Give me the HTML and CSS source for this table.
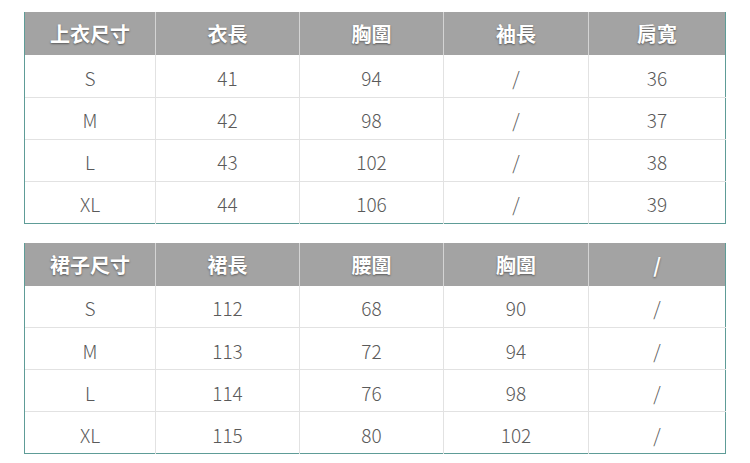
FILE: index.html
```html
<!DOCTYPE html>
<html lang="zh-Hant">
<head>
<meta charset="utf-8">
<link rel="stylesheet" href="styles.css">
</head>
<body>
<div class="page">
  <table class="size-table">
    <colgroup><col class="c1"><col class="c2"><col class="c3"><col class="c4"><col class="c5"></colgroup>
    <thead>
      <tr><th>上衣尺寸</th><th>衣長</th><th>胸圍</th><th>袖長</th><th>肩寬</th></tr>
    </thead>
    <tbody>
      <tr><td>S</td><td>41</td><td>94</td><td>/</td><td>36</td></tr>
      <tr><td>M</td><td>42</td><td>98</td><td>/</td><td>37</td></tr>
      <tr><td>L</td><td>43</td><td>102</td><td>/</td><td>38</td></tr>
      <tr><td>XL</td><td>44</td><td>106</td><td>/</td><td>39</td></tr>
    </tbody>
  </table>
  <table class="size-table">
    <colgroup><col class="c1"><col class="c2"><col class="c3"><col class="c4"><col class="c5"></colgroup>
    <thead>
      <tr><th>裙子尺寸</th><th>裙長</th><th>腰圍</th><th>胸圍</th><th>/</th></tr>
    </thead>
    <tbody>
      <tr><td>S</td><td>112</td><td>68</td><td>90</td><td>/</td></tr>
      <tr><td>M</td><td>113</td><td>72</td><td>94</td><td>/</td></tr>
      <tr><td>L</td><td>114</td><td>76</td><td>98</td><td>/</td></tr>
      <tr><td>XL</td><td>115</td><td>80</td><td>102</td><td>/</td></tr>
    </tbody>
  </table>
</div>
</body>
</html>
```
FILE: styles.css
```css
html, body {
  margin: 0;
  padding: 0;
  background: #ffffff;
}
.page {
  padding: 12px 0 0 24px;
  display: flex;
  flex-direction: column;
  gap: 19px;
  font-family: "Noto Sans CJK TC", "Noto Sans", sans-serif;
}
.size-table {
  width: 701px;
  border-collapse: collapse;
  table-layout: fixed;
  border-left: 1px solid #5e9c97;
  border-right: 1px solid #5e9c97;
  border-bottom: 1px solid #5e9c97;
}
.c1 { width: 131px; }
.c2 { width: 144px; }
.c3 { width: 144px; }
.c4 { width: 145px; }
.c5 { width: 137px; }
.size-table th {
  height: 43px;
  padding: 0;
  box-sizing: border-box;
  background: #a3a3a3;
  color: #ffffff;
  font-size: 20px;
  font-weight: 700;
  text-shadow: 0 1px 2px rgba(0, 0, 0, 0.45);
  border-left: 1px solid #d4d4d4;
  text-align: center;
  vertical-align: middle;
}
.size-table th:first-child { border-left: none; }
.size-table td {
  height: 42px;
  padding: 3px 0 0;
  box-sizing: border-box;
  color: #5a5a5a;
  font-size: 19px;
  font-weight: 300;
  text-align: center;
  vertical-align: middle;
  border-top: 1px solid #e2e2e2;
  border-left: 1px solid #e2e2e2;
}
.size-table tbody tr:first-child td { border-top: none; }
.size-table td:first-child { border-left: 1px solid #5e9c97; }
```
